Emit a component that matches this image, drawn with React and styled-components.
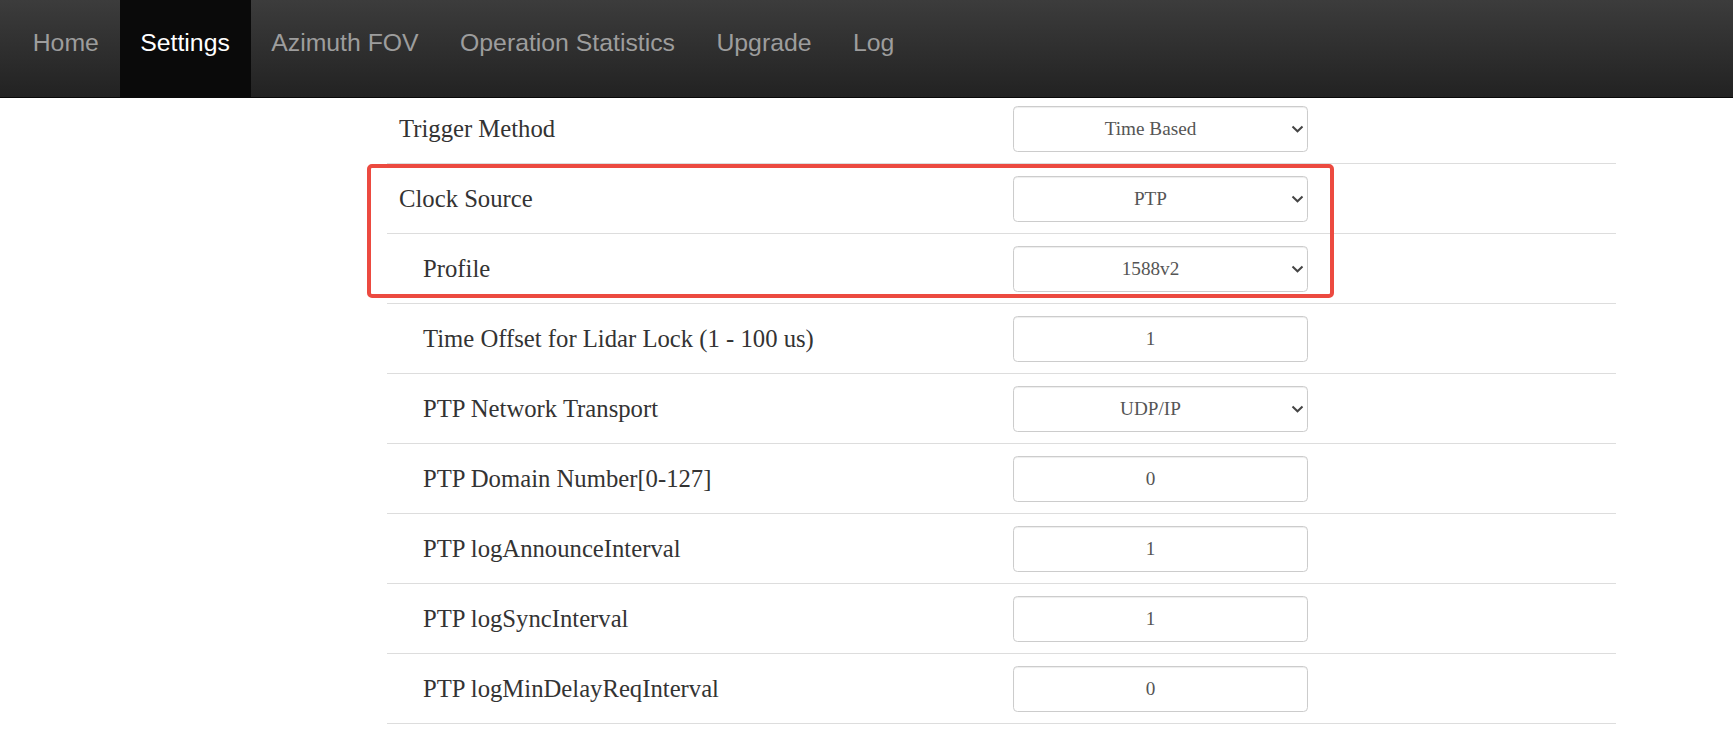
import React from "react";
import styled, { createGlobalStyle } from "styled-components";

const Global = createGlobalStyle`
  html, body { margin: 0; padding: 0; background: #fff; }
  body { font-family: "Liberation Serif", "Times New Roman", serif; overflow: hidden; }
  * { box-sizing: border-box; }
`;

const NavBar = styled.nav`
  position: relative;
  z-index: 2;
  display: flex;
  height: 98px;
  padding-left: 12px;
  background: linear-gradient(to bottom, #3c3c3c 0%, #222 100%);
  border-bottom: 1px solid #080808;
`;

const NavLink = styled.a`
  display: block;
  height: 97px;
  padding: 28px 20.7px 0;
  font-family: "Liberation Sans", Arial, sans-serif;
  font-size: 24.8px;
  line-height: 29px;
  color: ${(p) => (p.$active ? "#fff" : "#9d9d9d")};
  background: ${(p) => (p.$active ? "#0a0a0a" : "transparent")};
  text-decoration: none;
  white-space: nowrap;
`;

const Table = styled.div`
  position: relative;
  margin: -5px 0 0 387px;
  width: 1229px;
  border-bottom: 1px solid #ddd;
`;

const Row = styled.div`
  display: grid;
  grid-template-columns: 614px 1fr;
  align-items: center;
  height: 70px;
  border-top: 1px solid #ddd;
`;

const Label = styled.div`
  padding-left: ${(p) => (p.$indent ? 36 : 12)}px;
  font-size: 24.7px;
  color: #333;
  white-space: nowrap;
`;

const Cell = styled.div`
  padding-left: 12px;
`;

const ControlWrap = styled.div`
  position: relative;
  width: 295px;
  height: 46px;
`;

const controlBase = `
  width: 100%;
  height: 100%;
  border: 1px solid #ccc;
  border-radius: 4.4px;
  background: #fff;
  box-shadow: inset 0 1px 1px rgba(0,0,0,0.075);
  font-family: "Liberation Serif", "Times New Roman", serif;
  font-size: 19.2px;
  color: #555;
  text-align: center;
  padding: 0 32px 0 12px;
  outline: none;
`;

const Select = styled.select`
  ${controlBase}
  appearance: none;
  -webkit-appearance: none;
  text-align-last: center;
`;

const Input = styled.input`
  ${controlBase}
`;

const Chevron = styled.svg`
  position: absolute;
  right: 4px;
  top: 50%;
  margin-top: -4px;
  width: 13px;
  height: 8px;
  pointer-events: none;
`;

const Highlight = styled.div`
  position: absolute;
  left: -20px;
  top: 71px;
  width: 967px;
  height: 134px;
  border: 4px solid #ec4a40;
  border-radius: 5px;
  pointer-events: none;
`;

const navItems = ["Home", "Settings", "Azimuth FOV", "Operation Statistics", "Upgrade", "Log"];

const rows = [
  { label: "Trigger Method", type: "select", value: "Time Based" },
  { label: "Clock Source", type: "select", value: "PTP" },
  { label: "Profile", type: "select", value: "1588v2", indent: true },
  { label: "Time Offset for Lidar Lock (1 - 100 us)", type: "input", value: "1", indent: true },
  { label: "PTP Network Transport", type: "select", value: "UDP/IP", indent: true },
  { label: "PTP Domain Number[0-127]", type: "input", value: "0", indent: true },
  { label: "PTP logAnnounceInterval", type: "input", value: "1", indent: true },
  { label: "PTP logSyncInterval", type: "input", value: "1", indent: true },
  { label: "PTP logMinDelayReqInterval", type: "input", value: "0", indent: true },
];

function Control({ type, value }) {
  if (type === "select") {
    return (
      <ControlWrap>
        <Select defaultValue={value}>
          <option value={value}>{value}</option>
        </Select>
        <Chevron viewBox="0 0 13 8">
          <path d="M1.5 1.5 L6.5 6.3 L11.5 1.5" fill="none" stroke="#444" strokeWidth="2" />
        </Chevron>
      </ControlWrap>
    );
  }
  return (
    <ControlWrap>
      <Input defaultValue={value} />
    </ControlWrap>
  );
}

export default function App() {
  return (
    <>
      <Global />
      <NavBar>
        {navItems.map((n) => (
          <NavLink key={n} $active={n === "Settings"}>{n}</NavLink>
        ))}
      </NavBar>
      <Table>
        {rows.map((r) => (
          <Row key={r.label}>
            <Label $indent={r.indent}>{r.label}</Label>
            <Cell>
              <Control type={r.type} value={r.value} />
            </Cell>
          </Row>
        ))}
        <Highlight />
      </Table>
    </>
  );
}
